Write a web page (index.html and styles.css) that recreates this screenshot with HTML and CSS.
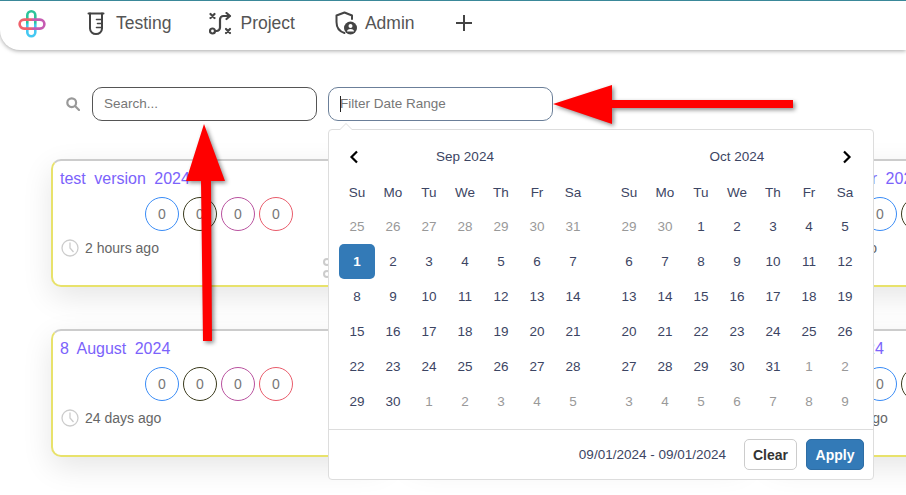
FILE: index.html
```html
<!DOCTYPE html>
<html lang="en">
<head>
  <meta charset="UTF-8" />
  <meta name="viewport" content="width=device-width, initial-scale=1" />
  <title>Test Versions</title>
  <link rel="stylesheet" href="styles.css">
</head>
<body>

  <nav class="navbar">
    <svg class="logo" width="28" height="28" viewBox="0 0 28 28" fill="none" stroke-width="2.600">
      <defs>
        <linearGradient id="vert" x1="0" y1="0" x2="0" y2="1">
          <stop offset="0.45" stop-color="#2cc49a" />
          <stop offset="0.55" stop-color="#45c8f2" />
        </linearGradient>
        <linearGradient id="horiz" x1="0" y1="0" x2="1" y2="0">
          <stop offset="0.45" stop-color="#f0616b" />
          <stop offset="0.55" stop-color="#c65bb2" />
        </linearGradient>
      </defs>
      <rect x="9.300" y="1.300" width="8" height="25" rx="4" stroke="url(#vert)" />
      <rect x="1.600" y="9.600" width="24.800" height="9" rx="4.500" stroke="url(#horiz)" />
    </svg>

    <a class="nav-item nav-testing">
      <svg width="18" height="24" viewBox="0 0 18 24" fill="none" stroke="#444" stroke-width="2" stroke-linecap="round" stroke-linejoin="round">
        <path d="M1.500 2.500h15" />
        <path d="M3 2.500v15a6 5.500 0 0 0 12 0v-15" />
        <path d="M9.500 8.500h5.500M10.500 12.500h4.500M9.500 16.500h5.500" stroke-width="1.600" />
      </svg>
      <span>Testing</span>
    </a>
    <a class="nav-item nav-project">
      <svg width="23" height="23" viewBox="0 0 23 23" fill="none" stroke="#444" stroke-width="2.200" stroke-linecap="round" stroke-linejoin="round">
        <circle cx="3.500" cy="19" r="2.500" />
        <path d="M6 19h1.500a3.500 3.500 0 0 0 3.500-3.500v-8a3.500 3.500 0 0 1 3.500-3.500h6" />
        <path d="M17.500 1l3.500 3-3.500 3" />
        <path d="M1.500 2l4 4M5.500 2l-4 4" />
        <path d="M17 17l4 4M21 17l-4 4" />
      </svg>
      <span>Project</span>
    </a>
    <a class="nav-item nav-admin">
      <svg width="22" height="24" viewBox="0 0 22 24" fill="none">
        <path d="M9.500 22C4.500 20.500 1.500 16.500 1.500 11V4.500L9.500 1.500l7.500 3V8" stroke="#444" stroke-width="2" stroke-linecap="round" stroke-linejoin="round" />
        <circle cx="15.500" cy="17" r="6.500" fill="#444" />
        <circle cx="15.500" cy="15" r="2" fill="#fff" />
        <path d="M12 20.500a3.500 2.500 0 0 1 7 0z" fill="#fff" />
      </svg>
      <span>Admin</span>
    </a>
    <a class="nav-item nav-add">
      <svg width="18" height="18" viewBox="0 0 18 18" stroke="#444" stroke-width="2">
        <path d="M9 1v16M1 9h16" />
      </svg>
    </a>
  </nav>

  <main class="content">
    <div class="filters">
      <svg class="search-icon" width="14" height="14" viewBox="0 0 14 14" fill="none" stroke="#999" stroke-width="2.200">
        <circle cx="5.700" cy="5.700" r="4.400" />
        <path d="M9 9l4 4" stroke-linecap="round" />
      </svg>
      <input class="field field-search" type="text" placeholder="Search..." />
      <div class="date-field">
        <input class="field field-date" type="text" placeholder="Filter Date Range" />
      </div>
    </div>

    <div class="card-grid">
      <div class="card">
        <a class="card-title">test version 2024</a>
        <div class="counts">
          <span class="count count-blue">0</span>
          <span class="count count-dark">0</span>
          <span class="count count-purple">0</span>
          <span class="count count-red">0</span>
        </div>
        <div class="card-time">
          <svg width="18" height="18" viewBox="0 0 18 18" fill="none" stroke="#ccc" stroke-width="1.300">
            <circle cx="9" cy="9" r="8" />
            <path d="M9 3.500V9l3.500 4" />
          </svg>
          <span>2 hours ago</span>
        </div>
        <svg class="card-link" width="16" height="22" viewBox="0 0 16 22" fill="none" stroke="#ccc" stroke-width="2">
          <circle cx="4" cy="5" r="3" />
          <circle cx="4" cy="17" r="3" />
          <circle cx="13" cy="11" r="3" />
          <path d="M6.500 7l4 2.500M6.500 15l4-2.500" />
        </svg>
      </div>
      <div class="card"></div>
      <div class="card">
        <a class="card-title">tests October 2024</a>
        <div class="counts">
          <span class="count count-blue">0</span>
          <span class="count count-dark">0</span>
          <span class="count count-purple">0</span>
          <span class="count count-red">0</span>
        </div>
        <div class="card-time">
          <svg width="18" height="18" viewBox="0 0 18 18" fill="none" stroke="#ccc" stroke-width="1.300">
            <circle cx="9" cy="9" r="8" />
            <path d="M9 3.500V9l3.500 4" />
          </svg>
          <span>2 hours ago</span>
        </div>
      </div>

      <div class="card">
        <a class="card-title">8 August 2024</a>
        <div class="counts">
          <span class="count count-blue">0</span>
          <span class="count count-dark">0</span>
          <span class="count count-purple">0</span>
          <span class="count count-red">0</span>
        </div>
        <div class="card-time">
          <svg width="18" height="18" viewBox="0 0 18 18" fill="none" stroke="#ccc" stroke-width="1.300">
            <circle cx="9" cy="9" r="8" />
            <path d="M9 3.500V9l3.500 4" />
          </svg>
          <span>24 days ago</span>
        </div>
      </div>
      <div class="card"></div>
      <div class="card">
        <a class="card-title">8 March 2024</a>
        <div class="counts">
          <span class="count count-blue">0</span>
          <span class="count count-dark">0</span>
          <span class="count count-purple">0</span>
          <span class="count count-red">0</span>
        </div>
        <div class="card-time">
          <svg width="18" height="18" viewBox="0 0 18 18" fill="none" stroke="#ccc" stroke-width="1.300">
            <circle cx="9" cy="9" r="8" />
            <path d="M9 3.500V9l3.500 4" />
          </svg>
          <span>2 months ago</span>
        </div>
      </div>
    </div>
  </main>

  <!-- date range picker, open under the date field -->
  <div class="picker">
    <div class="calendars">
      <table class="calendar">
        <thead>
          <tr>
            <th class="month-nav month-prev">
              <svg width="10" height="14" viewBox="0 0 10 14" fill="none" stroke="#000" stroke-width="2.200"><path d="M8 1.500L2.500 7 8 12.500" /></svg>
            </th>
            <th class="month-name" colspan="5">Sep 2024</th>
            <th></th>
          </tr>
          <tr class="weekdays"><th>Su</th><th>Mo</th><th>Tu</th><th>We</th><th>Th</th><th>Fr</th><th>Sa</th></tr>
        </thead>
        <tbody>
          <tr><td class="off">25</td><td class="off">26</td><td class="off">27</td><td class="off">28</td><td class="off">29</td><td class="off">30</td><td class="off">31</td></tr>
          <tr><td class="active">1</td><td>2</td><td>3</td><td>4</td><td>5</td><td>6</td><td>7</td></tr>
          <tr><td>8</td><td>9</td><td>10</td><td>11</td><td>12</td><td>13</td><td>14</td></tr>
          <tr><td>15</td><td>16</td><td>17</td><td>18</td><td>19</td><td>20</td><td>21</td></tr>
          <tr><td>22</td><td>23</td><td>24</td><td>25</td><td>26</td><td>27</td><td>28</td></tr>
          <tr><td>29</td><td>30</td><td class="off">1</td><td class="off">2</td><td class="off">3</td><td class="off">4</td><td class="off">5</td></tr>
        </tbody>
      </table>
      <table class="calendar">
        <thead>
          <tr>
            <th></th>
            <th class="month-name" colspan="5">Oct 2024</th>
            <th class="month-nav month-next">
              <svg width="10" height="14" viewBox="0 0 10 14" fill="none" stroke="#000" stroke-width="2.200"><path d="M2 1.500L7.500 7 2 12.500" /></svg>
            </th>
          </tr>
          <tr class="weekdays"><th>Su</th><th>Mo</th><th>Tu</th><th>We</th><th>Th</th><th>Fr</th><th>Sa</th></tr>
        </thead>
        <tbody>
          <tr><td class="off">29</td><td class="off">30</td><td>1</td><td>2</td><td>3</td><td>4</td><td>5</td></tr>
          <tr><td>6</td><td>7</td><td>8</td><td>9</td><td>10</td><td>11</td><td>12</td></tr>
          <tr><td>13</td><td>14</td><td>15</td><td>16</td><td>17</td><td>18</td><td>19</td></tr>
          <tr><td>20</td><td>21</td><td>22</td><td>23</td><td>24</td><td>25</td><td>26</td></tr>
          <tr><td>27</td><td>28</td><td>29</td><td>30</td><td>31</td><td class="off">1</td><td class="off">2</td></tr>
          <tr><td class="off">3</td><td class="off">4</td><td class="off">5</td><td class="off">6</td><td class="off">7</td><td class="off">8</td><td class="off">9</td></tr>
        </tbody>
      </table>
    </div>
    <div class="picker-footer">
      <span class="picker-range">09/01/2024 - 09/01/2024</span>
      <button class="btn btn-clear">Clear</button>
      <button class="btn btn-apply">Apply</button>
    </div>
  </div>

  <!-- red annotation arrows drawn on top of the screenshot -->
  <svg class="annotations" width="906" height="495" viewBox="0 0 906 495" fill="#f00">
    <path d="M553 104L612 85V100H793V108H612V124Z" />
    <path d="M204 124L225 181H211L212 341H203L201 181H186Z" />
  </svg>

</body>
</html>
```

FILE: styles.css
```css
* {
  box-sizing: border-box;
}

body {
  margin: 0;
  width: 906px;
  height: 495px;
  overflow: hidden;
  position: relative;
  background: #fff;
  font-family: "Liberation Sans", Arial, sans-serif;
  color: #555;
}

/* top bar */
.navbar {
  display: flex;
  align-items: center;
  gap: 37px;
  height: 50px;
  padding: 0 0 5px 18px;
  background: #fff;
  border-top: 1px solid #3a8899;
  border-bottom-left-radius: 20px;
  box-shadow: 0 1px 4px rgba(0, 0, 0, 0.35);
}

.logo {
  margin: 2px 4px 0 0;
}

.nav-item {
  display: flex;
  align-items: center;
  gap: 11px;
  font-size: 17.5px;
  color: #555;
}

.nav-project {
  gap: 8px;
  margin-left: 1px;
}

.nav-admin {
  gap: 8px;
  margin-left: 3px;
}

.nav-add {
  margin-left: 3px;
}

/* search and date filter */
.content {
  padding: 37px 0 0 51px;
}

.filters {
  display: flex;
  align-items: center;
  height: 34px;
  padding-left: 15px;
}

.search-icon {
  margin-right: 12px;
}

.field {
  width: 225px;
  height: 34px;
  padding: 0 11px 2px 11px;
  border: 1px solid #555;
  border-radius: 10px;
  font-family: inherit;
  font-size: 13.5px;
  background: #fff;
  outline: none;
}

.field::placeholder {
  color: #777;
}

.date-field {
  position: relative;
  margin-left: 11px;
}

.field-date {
  display: block;
  border-color: #6b7f99;
}

/* text caret in the focused field */
.date-field::after {
  content: "";
  position: absolute;
  left: 12px;
  top: 9px;
  width: 1px;
  height: 16px;
  background: #222;
}

/* project cards */
.card-grid {
  display: grid;
  grid-template-columns: repeat(3, 335px);
  grid-auto-rows: 128px;
  column-gap: 24px;
  row-gap: 42px;
  margin-top: 38px;
  width: 1100px;
}

.card {
  position: relative;
  padding: 8px 8px 0 7px;
  background: #fff;
  border: 2px solid #e8e26b;
  border-top-color: #ccc;
  border-radius: 10px;
  box-shadow: 0 10px 30px rgba(0, 0, 0, 0.1);
}

.card-title {
  display: block;
  height: 19px;
  font-size: 16px;
  line-height: 19px;
  word-spacing: 4px;
  color: #7b63fb;
}

.counts {
  display: flex;
  gap: 4px;
  margin: 9px 0 0 85px;
}

.count {
  display: flex;
  align-items: center;
  justify-content: center;
  width: 34px;
  height: 34px;
  border: 1px solid;
  border-radius: 50%;
  font-size: 14px;
  color: #777;
}

.count-blue {
  border-color: #3a8cf6;
}

.count-dark {
  border-color: #3a3a1c;
}

.count-purple {
  border-color: #b9529f;
}

.count-red {
  border-color: #e95c6b;
}

.card-time {
  display: flex;
  align-items: center;
  gap: 6px;
  margin: 8px 0 0 1px;
  font-size: 14px;
  color: #666;
}

.card-link {
  position: absolute;
  right: 45px;
  bottom: 6px;
}

/* date range picker */
.picker {
  position: absolute;
  left: 328px;
  top: 129px;
  width: 546px;
  height: 351px;
  background: #fff;
  border: 1px solid #ddd;
  border-radius: 4px;
}

.picker::before,
.picker::after {
  content: "";
  position: absolute;
  left: 10px;
  top: -7px;
  border-left: 7px solid transparent;
  border-right: 7px solid transparent;
  border-bottom: 7px solid #ddd;
}

.picker::after {
  top: -6px;
  left: 11px;
  border-left-width: 6px;
  border-right-width: 6px;
  border-bottom: 6px solid #fff;
}

.calendars {
  display: flex;
  justify-content: space-between;
  height: 299px;
  padding: 9px 10px 0 10px;
}

.calendar {
  border-collapse: collapse;
  table-layout: fixed;
  width: 252px;
  height: 280px;
  font-size: 13.5px;
  color: #3c4563;
}

.calendar th,
.calendar td {
  width: 36px;
  height: 35px;
  padding: 0;
  text-align: center;
  font-weight: normal;
}

.calendar .weekdays th {
  padding-top: 2px;
}

.calendar .month-name {
  width: 180px;
}

.calendar td.off {
  color: #999;
}

.calendar td.active {
  background: #337ab7;
  color: #fff;
  border-radius: 5px;
  font-weight: bold;
}

.month-nav svg {
  display: block;
}

.month-prev svg {
  margin-left: 10px;
}

.month-next svg {
  margin-left: 15px;
}

.picker-footer {
  display: flex;
  align-items: center;
  justify-content: flex-end;
  height: 50px;
  padding-right: 9px;
  border-top: 1px solid #ddd;
}

.picker-range {
  margin-right: 18px;
  font-size: 13.5px;
  color: #3c4563;
}

.btn {
  height: 31px;
  border-radius: 5px;
  font-family: inherit;
  font-size: 14px;
  font-weight: bold;
}

.btn-clear {
  width: 53px;
  margin-right: 9px;
  padding: 0;
  background: #fff;
  border: 1px solid #ccc;
  color: #333;
}

.btn-apply {
  width: 58px;
  padding: 0;
  background: #337ab7;
  border: 1px solid #2e6da4;
  color: #fff;
}

.annotations {
  position: absolute;
  left: 0;
  top: 0;
  pointer-events: none;
  filter: drop-shadow(2px 2px 2px rgba(0, 0, 0, 0.45));
}
```
